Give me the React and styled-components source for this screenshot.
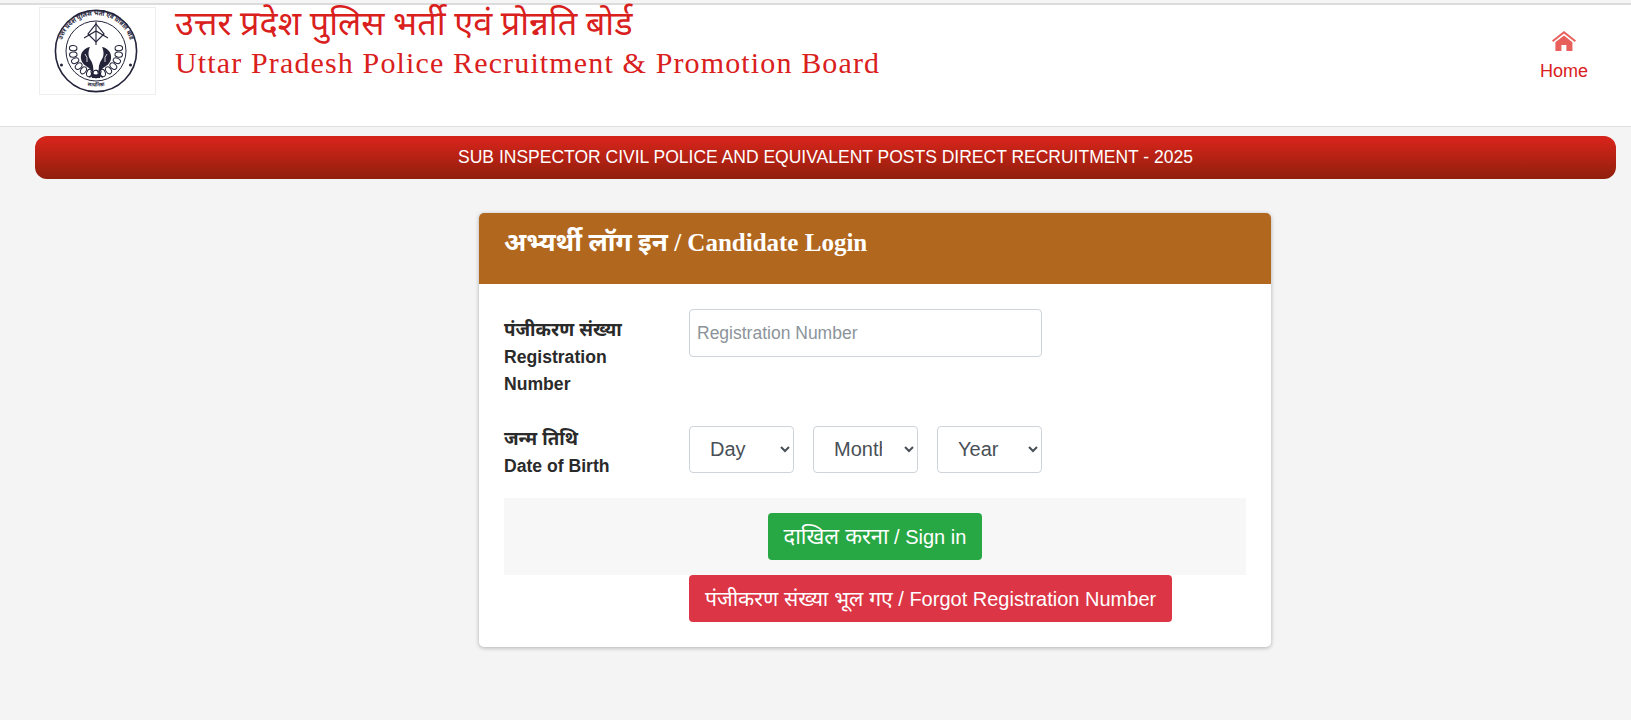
import React from "react";
import styled, { createGlobalStyle } from "styled-components";

const Global = createGlobalStyle`
  html, body { margin: 0; padding: 0; background: #f4f4f4; height: 100%; overflow: hidden; }
  * { box-sizing: border-box; }
  body { font-family: "Liberation Sans", "Noto Sans", Arial, sans-serif; font-size: 16px; color: #212529; }
`;

const Page = styled.div`
  min-height: 720px;
  background: #f4f4f4;
  border-top: 3px solid #f5f5f5;
`;
const Header = styled.header`
  height: 124px;
  background: #fff;
  border-top: 2px solid #dcdcdc;
  border-bottom: 1px solid #dfdfdc;
  display: flex;
  justify-content: space-between;
  padding: 2px 43px 0 39px;
`;
const Brand = styled.div`
  display: flex;
  align-items: flex-start;
  gap: 19px;
`;
const LogoBox = styled.div`
  width: 117px;
  height: 88px;
  border: 1px solid #eeeeee;
  padding-right: 3px;
  display: flex;
  align-items: center;
  justify-content: center;
`;
const Titles = styled.div`
  font-family: "Liberation Serif", "Noto Sans", serif;
  color: #d9201c;
`;
const HindiTitle = styled.div`
  font-size: 34.3px;
  line-height: 38px;
  margin-top: -3px;
`;
const EnglishTitle = styled.div`
  font-size: 30px;
  line-height: 34px;
  letter-spacing: 1.14px;
  margin-top: 4px;
`;
const HomeLink = styled.a`
  display: flex;
  flex-direction: column;
  align-items: center;
  margin-top: 24px;
  color: #d9201c;
  font-size: 18px;
  line-height: 24px;
  text-decoration: none;
  gap: 8px;
`;
const Banner = styled.div`
  margin: 9px 15px 0 35px;
  height: 43px;
  border-radius: 12px;
  background: linear-gradient(#d4241a 10%, #8f1f0c);
  color: #fff;
  font-size: 17.5px;
  display: flex;
  align-items: center;
  justify-content: center;
`;
const Card = styled.section`
  width: 792px;
  margin: 34px 0 0 479px;
  background: #fff;
  border-radius: 5px;
  box-shadow: 0 1px 4px rgba(0,0,0,.28);
  overflow: hidden;
`;
const CardHead = styled.h1`
  margin: 0;
  height: 71px;
  background: #b1671e;
  color: #fff;
  font: bold 25px/30px "Liberation Serif", "Noto Sans", serif;
  padding: 15px 25px 0;
`;
const HeadHindi = styled.span`
  font-size: 26.2px;
`;
const CardBody = styled.div`
  padding: 25px 25px 25px;
`;
const FormRow = styled.div`
  display: grid;
  grid-template-columns: 185px 352.5px;
  margin-bottom: ${p => p.$mb}px;
`;
const Label = styled.label`
  font-weight: 700;
  font-size: 17.6px;
  line-height: 27px;
  padding-top: 7px;
  width: 130px;
  color: #2a2a2a;
`;
const LabelHindi = styled.span`
  font-size: 18.6px;
`;
const TextInput = styled.input`
  height: 48px;
  width: 352.5px;
  border: 1px solid #ced4da;
  border-radius: 4px;
  padding: 0 7px;
  font: 17.5px "Liberation Sans", sans-serif;
  &::placeholder { color: #8c949b; opacity: 1; }
`;
const Selects = styled.div`
  display: flex;
  align-items: flex-start;
  gap: 19.5px;
  padding-top: 8px;
`;
const Select = styled.select`
  flex: 1 1 0;
  min-width: 0;
  height: 47px;
  border: 1px solid #ced4da;
  border-radius: 4px;
  background: #fff;
  color: #495057;
  font: 20px "Liberation Sans", sans-serif;
  padding: 0 19px 2px 16px;
`;
const Footer = styled.div`
  height: 77px;
  background: #f7f7f7;
  display: flex;
  justify-content: center;
  align-items: flex-start;
  padding-top: 15px;
`;
const Btn = styled.button`
  height: 47px;
  border: 0;
  border-radius: 4px;
  background: ${p => p.$bg};
  color: #fff;
  font: 20px "Liberation Sans", "Noto Sans", sans-serif;
  padding: 0 16px 2px;
  white-space: nowrap;
`;
const BtnHindi = styled.span`
  font-size: ${p => p.$size}px;
`;
const ForgotRow = styled.div`
  padding-left: 185px;
`;

const leaves = Array.from({ length: 8 }, (_, i) => 195 - i * 16);
const INK = "#23233a";

const Seal = () => (
  <svg width="84" height="84" viewBox="0 0 84 84">
    <defs>
      <path id="arcTop" d="M7.600 52 A35.800 35.800 0 1 1 76.400 52" />
      <path id="arcBottom" d="M20 70 A35.800 35.800 0 0 0 64 70" />
    </defs>
    <circle cx="42" cy="42" r="40.600" fill="#fff" stroke={INK} strokeWidth="1.600" />
    <circle cx="42" cy="42" r="30" fill="none" stroke={INK} strokeWidth="1" />
    <text fontFamily="'Noto Sans', sans-serif" fontSize="6.200" fontWeight="700" fill={INK}>
      <textPath href="#arcTop" startOffset="50%" textAnchor="middle">उत्तर प्रदेश पुलिस भर्ती एवं प्रोन्नति बोर्ड</textPath>
    </text>
    <text fontFamily="'Noto Sans', sans-serif" fontSize="5" fontWeight="700" fill={INK}>
      <textPath href="#arcBottom" startOffset="50%" textAnchor="middle">सत्यनिष्ठा</textPath>
    </text>
    <circle cx="7.500" cy="56" r="1.500" fill={INK} />
    <circle cx="76.500" cy="56" r="1.500" fill={INK} />
    {leaves.map(a => (
      <g key={a}>
        <ellipse cx="42" cy="19" rx="2.600" ry="3.800" fill="#fff" stroke={INK} strokeWidth="1" transform={`rotate(${a} 42 42)`} />
        <ellipse cx="42" cy="19" rx="2.600" ry="3.800" fill="#fff" stroke={INK} strokeWidth="1" transform={`rotate(${-a} 42 42)`} />
      </g>
    ))}
    <path d="M42 15 50 25 42 33 34 25Z" fill="#fff" stroke={INK} strokeWidth="1.200" />
    <path d="M42 13V36M30 29 42 22 54 29" fill="none" stroke={INK} strokeWidth="1.100" />
    <path d="M36 38c-6 1-10 6-9 12 1 5 5 7 8 9 2 2 3 4 4 6 1-6 0-11-3-15-2-3-2-8 0-12z" fill={INK} />
    <path d="M48 38c6 1 10 6 9 12-1 5-5 7-8 9-2 2-3 4-4 6-1-6 0-11 3-15 2-3 2-8 0-12z" fill={INK} />
    <path d="M31 45q3 3 2 8M53 45q-3 3-2 8" fill="none" stroke="#fff" strokeWidth=".8" />
    <path d="M36 61q6 9 12 0l-2 8h-8z" fill={INK} />
  </svg>
);

const HomeIcon = () => (
  <svg width="24" height="20" viewBox="0 0 24 20">
    <path fill="#e8605c" d="M12 0 0 9.600l1.200 1.500L12 2.600l10.800 8.500 1.200-1.500zM12 4.400 3.400 11.200V20h6v-6h5v6h6v-8.800z" />
  </svg>
);

export default function App() {
  return (
    <Page>
      <Global />
      <Header>
        <Brand>
          <LogoBox><Seal /></LogoBox>
          <Titles>
            <HindiTitle>उत्तर प्रदेश पुलिस भर्ती एवं प्रोन्नति बोर्ड</HindiTitle>
            <EnglishTitle>Uttar Pradesh Police Recruitment &amp; Promotion Board</EnglishTitle>
          </Titles>
        </Brand>
        <HomeLink href="#"><HomeIcon />Home</HomeLink>
      </Header>
      <Banner>SUB INSPECTOR CIVIL POLICE AND EQUIVALENT POSTS DIRECT RECRUITMENT - 2025</Banner>
      <Card>
        <CardHead><HeadHindi>अभ्यर्थी लॉग इन</HeadHindi> / Candidate Login</CardHead>
        <CardBody>
          <FormRow $mb={20}>
            <Label><LabelHindi>पंजीकरण संख्या</LabelHindi><br />Registration Number</Label>
            <TextInput placeholder="Registration Number" />
          </FormRow>
          <FormRow $mb={18}>
            <Label><LabelHindi>जन्म तिथि</LabelHindi><br />Date of Birth</Label>
            <Selects>
              <Select><option>Day</option></Select>
              <Select><option>Month</option></Select>
              <Select><option>Year</option></Select>
            </Selects>
          </FormRow>
          <Footer><Btn $bg="#28a745"><BtnHindi $size={21.8}>दाखिल करना</BtnHindi> / Sign in</Btn></Footer>
          <ForgotRow><Btn $bg="#dc3545"><BtnHindi $size={21.1}>पंजीकरण संख्या भूल गए</BtnHindi> / Forgot Registration Number</Btn></ForgotRow>
        </CardBody>
      </Card>
    </Page>
  );
}
